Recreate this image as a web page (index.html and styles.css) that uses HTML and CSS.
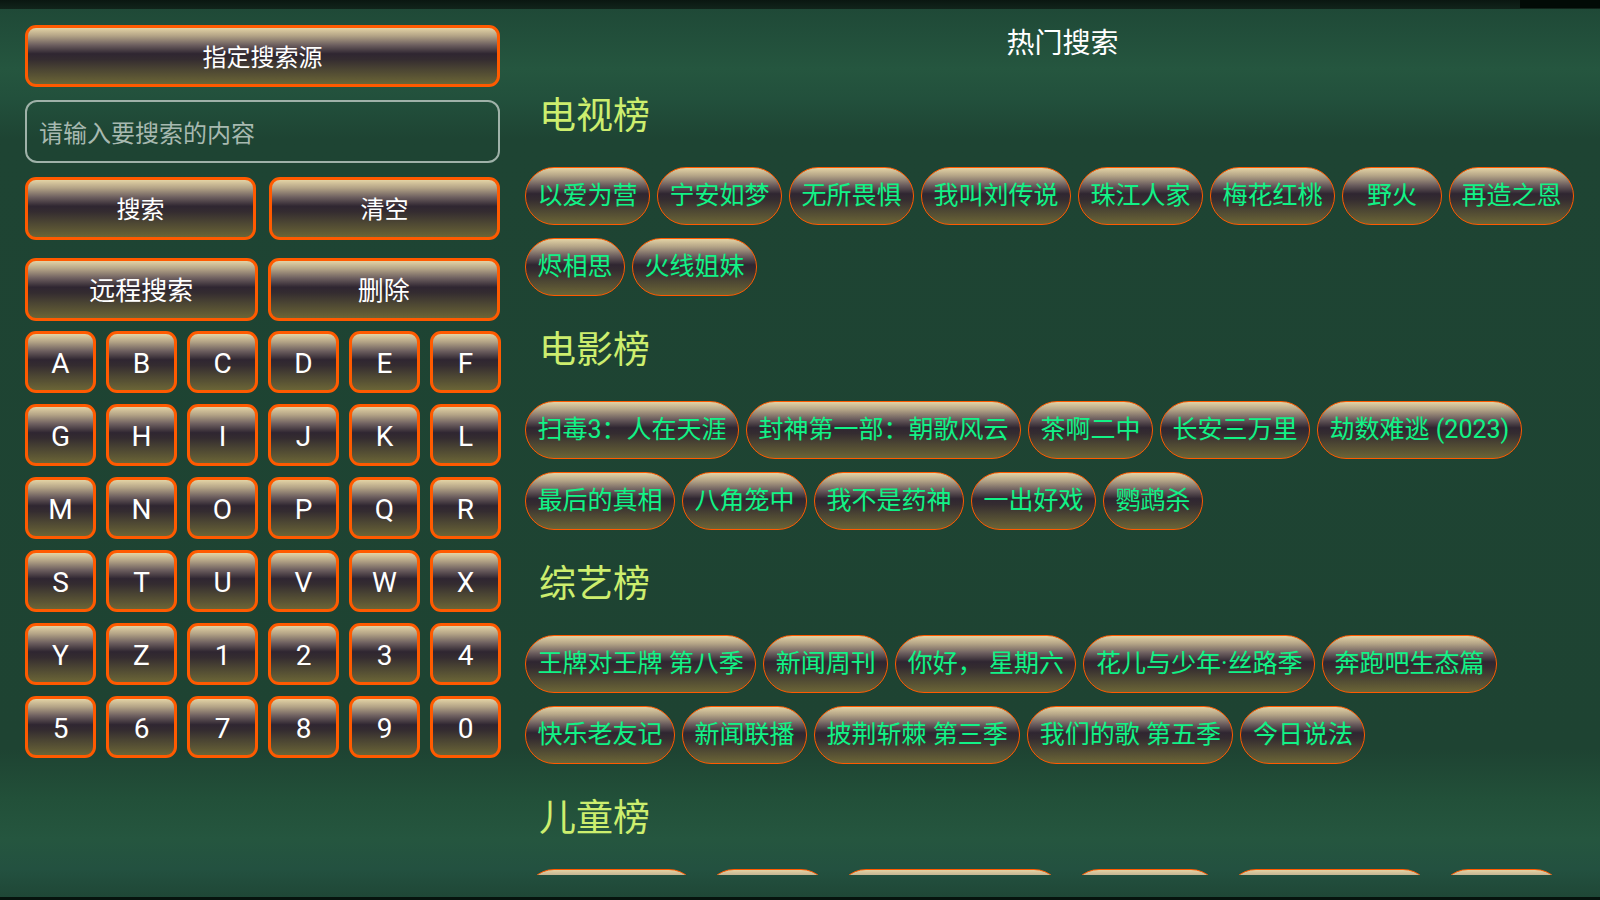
FILE: index.html
```html
<!DOCTYPE html>
<html lang="zh-CN">
<head>
    <meta charset="UTF-8">
    <meta name="viewport" content="width=device-width, initial-scale=1.0">
    <title>搜索</title>
    <link rel="stylesheet" href="styles.css">
</head>
<body>
    <div class="topbar"><div class="topbar-corner"></div></div>

    <div class="main">
        <div class="side">
            <div class="btn btn-source">指定搜索源</div>

            <div class="search-box">请输入要搜索的内容</div>

            <div class="btn-row">
                <div class="btn">搜索</div>
                <div class="btn">清空</div>
            </div>
            <div class="btn-row btn-row-2">
                <div class="btn btn-big">远程搜索</div>
                <div class="btn btn-big">删除</div>
            </div>

            <div class="keys">
                <div class="key">A</div><div class="key">B</div><div class="key">C</div>
                <div class="key">D</div><div class="key">E</div><div class="key">F</div>
                <div class="key">G</div><div class="key">H</div><div class="key">I</div>
                <div class="key">J</div><div class="key">K</div><div class="key">L</div>
                <div class="key">M</div><div class="key">N</div><div class="key">O</div>
                <div class="key">P</div><div class="key">Q</div><div class="key">R</div>
                <div class="key">S</div><div class="key">T</div><div class="key">U</div>
                <div class="key">V</div><div class="key">W</div><div class="key">X</div>
                <div class="key">Y</div><div class="key">Z</div><div class="key">1</div>
                <div class="key">2</div><div class="key">3</div><div class="key">4</div>
                <div class="key">5</div><div class="key">6</div><div class="key">7</div>
                <div class="key">8</div><div class="key">9</div><div class="key">0</div>
            </div>
        </div>

        <div class="hot">
            <h1 class="hot-title">热门搜索</h1>

            <div class="section">
                <h2 class="section-title">电视榜</h2>
                <div class="tags">
                    <span class="tag">以爱为营</span>
                    <span class="tag">宁安如梦</span>
                    <span class="tag">无所畏惧</span>
                    <span class="tag">我叫刘传说</span>
                    <span class="tag">珠江人家</span>
                    <span class="tag">梅花红桃</span>
                    <span class="tag">野火</span>
                    <span class="tag">再造之恩</span>
                    <span class="tag">烬相思</span>
                    <span class="tag">火线姐妹</span>
                </div>
            </div>

            <div class="section">
                <h2 class="section-title">电影榜</h2>
                <div class="tags">
                    <span class="tag">扫毒3：人在天涯</span>
                    <span class="tag">封神第一部：朝歌风云</span>
                    <span class="tag">茶啊二中</span>
                    <span class="tag">长安三万里</span>
                    <span class="tag">劫数难逃 (2023)</span>
                    <span class="tag">最后的真相</span>
                    <span class="tag">八角笼中</span>
                    <span class="tag">我不是药神</span>
                    <span class="tag">一出好戏</span>
                    <span class="tag">鹦鹉杀</span>
                </div>
            </div>

            <div class="section">
                <h2 class="section-title">综艺榜</h2>
                <div class="tags">
                    <span class="tag">王牌对王牌 第八季</span>
                    <span class="tag">新闻周刊</span>
                    <span class="tag">你好， 星期六</span>
                    <span class="tag">花儿与少年·丝路季</span>
                    <span class="tag">奔跑吧生态篇</span>
                    <span class="tag">快乐老友记</span>
                    <span class="tag">新闻联播</span>
                    <span class="tag">披荆斩棘 第三季</span>
                    <span class="tag">我们的歌 第五季</span>
                    <span class="tag">今日说法</span>
                </div>
            </div>

            <div class="section">
                <h2 class="section-title">儿童榜</h2>
                <div class="tags">
                    <span class="tag tag-6"></span>
                    <span class="tag tag-4"></span>
                    <span class="tag tag-8"></span>
                    <span class="tag tag-5"></span>
                    <span class="tag tag-7"></span>
                    <span class="tag tag-4"></span>
                </div>
            </div>
        </div>
    </div>

    <div class="bottombar"></div>
</body>
</html>
```

FILE: styles.css
```css
body {
    margin: 0;
    width: 1600px;
    height: 900px;
    overflow: hidden;
    background: #0b1a12;
    font-family: Roboto, "Noto Sans CJK SC", sans-serif;
    color: #fff;
}

.topbar {
    height: 9px;
    background: linear-gradient(to bottom, #0a1711, #11241b);
    position: relative;
}
.topbar-corner {
    position: absolute;
    right: 0;
    top: 0;
    width: 80px;
    height: 8px;
    background: #020a06;
}

.main {
    height: 888px;
    display: flex;
    background: linear-gradient(to bottom,
        #1f4937 0px,
        #25563f 60px,
        #22503c 90px,
        #1e4433 130px,
        #1e4332 740px,
        #225039 790px,
        #25563f 830px,
        #235140 860px,
        #1f4736 888px);
}

.bottombar {
    height: 3px;
    background: #06130d;
}

/* left column */
.side {
    width: 475px;
    padding: 16px 0 0 25px;
    flex-shrink: 0;
}

.btn, .key, .tag {
    background: linear-gradient(to bottom,
        #e3d3a5 0%,
        #b3a386 14%,
        #6e6060 30%,
        #2f2631 46%,
        #342c30 56%,
        #4b4533 74%,
        #6b6536 100%);
    border: 3px solid #ff5a00;
    box-sizing: border-box;
    color: #fff;
    text-align: center;
}

.btn {
    height: 62px;
    line-height: 60px;
    border-radius: 11px;
    font-size: 24px;
}
.btn-big {
    font-size: 26px;
}

.search-box {
    margin-top: 13px;
    height: 63px;
    border: 2px solid #9fb2a9;
    border-radius: 12px;
    box-sizing: border-box;
    padding-left: 12px;
    line-height: 64px;
    font-size: 24px;
    color: #a7b9b0;
}

.btn-row {
    margin-top: 14px;
    display: grid;
    grid-template-columns: 1fr 1fr;
    gap: 13px;
}
.btn-row .btn {
    height: 63px;
    line-height: 61px;
}
.btn-row-2 {
    margin-top: 18px;
    gap: 10px;
}

.keys {
    margin-top: 10px;
    display: grid;
    grid-template-columns: repeat(6, 71px);
    column-gap: 10px;
    row-gap: 11px;
}
.key {
    height: 62px;
    line-height: 59px;
    border-radius: 11px;
    font-size: 28px;
}

/* right column */
.hot {
    flex: 1;
    margin-left: 25px;
    height: 866px;
    overflow: hidden;
}

.hot-title {
    margin: 0;
    padding-top: 15px;
    text-align: center;
    font-size: 28px;
    font-weight: normal;
    line-height: 40px;
    color: #fff;
}

.section {
    margin-bottom: 28px;
}
.section:first-of-type {
    margin-top: 26px;
}

.section-title {
    margin: 0 0 26px 14px;
    padding-top: 3px;
    font-size: 37px;
    font-weight: normal;
    line-height: 48px;
    color: #cdee6e;
}

.tags {
    display: flex;
    flex-wrap: wrap;
    column-gap: 7px;
    row-gap: 13px;
}
.tag {
    height: 58px;
    min-width: 100px;
    padding: 0 11.5px;
    border-width: 1px;
    border-radius: 29px;
    line-height: 56px;
    font-size: 25px;
    color: #12f286;
    white-space: nowrap;
}
.tag-4 { width: 125px; }
.tag-5 { width: 150px; }
.tag-6 { width: 173px; }
.tag-7 { width: 205px; }
.tag-8 { width: 226px; }
```
